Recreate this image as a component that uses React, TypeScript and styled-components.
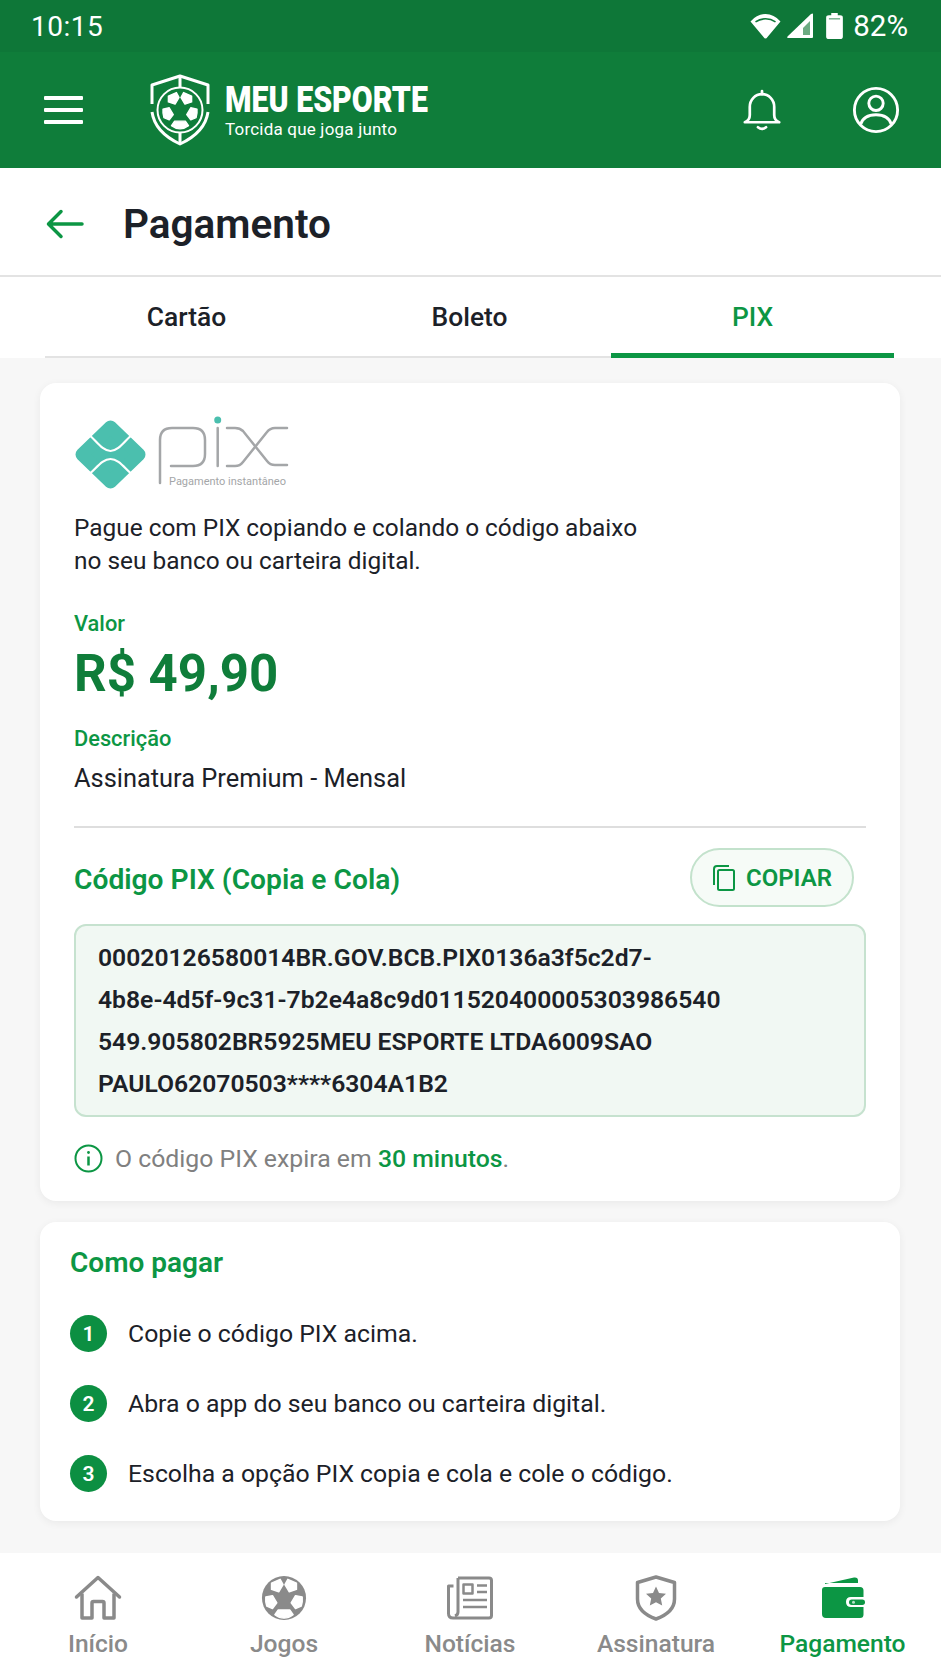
import { ReactNode } from "react";
import styled, { createGlobalStyle } from "styled-components";

const GlobalStyle = createGlobalStyle`
  html, body {
    margin: 0;
    padding: 0;
    background: #f7f7f7;
  }
  * {
    box-sizing: border-box;
  }
  body {
    font-family: Roboto, "Noto Sans", sans-serif;
    color: #1c2128;
  }
`;

function BallPanels({ fill, stroke }: { fill: string; stroke: string }) {
  return (
    <g fill={fill} stroke={stroke} strokeWidth="1.5" strokeLinejoin="round">
      <path d="M11 8.500L20 4.500l3 5.500-4.500 7.500L11 15z" />
      <path d="M37 8.500L28 4.500l-3 5.500 4.500 7.500L37 15z" />
      <path d="M5 23l7-1.500 4.500 7.500-4.500 6-6-2.500q-1.500-5-1-9.500z" />
      <path d="M43 23l-7-1.500-4.500 7.500 4.500 6 6-2.500q1.500-5 1-9.500z" />
      <path d="M18 36.500h12l3.500 5q-4.500 3.500-9.500 3.500t-9.500-3.500z" />
    </g>
  );
}

function SoccerBall({ size, color, panel }: { size: number; color: string; panel: string }) {
  return (
    <svg width={size} height={size} viewBox="0 0 48 48">
      <circle cx="24" cy="24" r="23" fill={color} />
      <BallPanels fill={panel} stroke={panel} />
    </svg>
  );
}

function BrandLogo() {
  return (
    <svg width="62" height="72" viewBox="0 0 62 72" fill="none">
      <path
        d="M3 30V11L31 2L59 11V30M59 38C57 52 46 63 31 70C16 63 5 52 3 38"
        stroke="#fff"
        strokeWidth="3"
        strokeLinejoin="round"
      />
      <path d="M31 2V13M31 59V70" stroke="#fff" strokeWidth="3" />
      <circle cx="31" cy="36" r="22.500" stroke="#fff" strokeWidth="2" />
      <svg x="9.500" y="14.500" width="43" height="43" viewBox="0 0 48 48">
        <BallPanels fill="#fff" stroke="#fff" />
      </svg>
    </svg>
  );
}

function PixLogo() {
  return (
    <svg width="224" height="76" viewBox="0 0 224 76" fill="none">
      <path d="M36.500 13L65 40.500 36.500 68 8 40.500z" fill="#4bbfae" stroke="#4bbfae" strokeWidth="13" strokeLinejoin="round" />
      <g stroke="#fff" strokeWidth="2.200">
        <path d="M13 19C22 26 28 37 36.500 37S51 26 60 19" />
        <path d="M13 62C22 55 28 45 36.500 45S51 55 60 62" />
      </g>
      <g stroke="#a4a6a8" strokeWidth="2.500" strokeLinecap="round">
        <path d="M86 69V26q0-12 12-12h21q12 0 12 12v14q0 12-12 12H97" />
        <path d="M143.700 14v38" />
        <path d="M153 14h8q5 0 8 3l24 30q3 4 8 4h12" />
        <path d="M153 52h8q5 0 8-4l24-30q3-4 8-4h12" />
      </g>
      <circle cx="143.700" cy="6" r="3.500" fill="#4bbfae" />
      <PixCaption x="95" y="71">Pagamento instantâneo</PixCaption>
    </svg>
  );
}

const PixCaption = styled.text`
  font-family: Roboto, sans-serif;
  font-size: 11px;
  fill: #a4a6a8;
`;

function NavHome() {
  return (
    <svg width="48" height="46" viewBox="0 0 48 46" fill="none" stroke="#8a8a8a" strokeWidth="3.500" strokeLinejoin="round">
      <path d="M2.500 22L24 2.500 45.500 22" strokeLinecap="round" />
      <path d="M8 18.500V43H18V28q0-1.500 1.500-1.500h9q1.500 0 1.500 1.500v15h10V18.500" />
    </svg>
  );
}

function NavNews() {
  return (
    <svg width="46" height="44" viewBox="0 0 46 44" fill="none" stroke="#8a8a8a" strokeWidth="3" strokeLinejoin="round">
      <path d="M11 2h31q2.500 0 2.500 2.500v35q0 2.500-2.500 2.500H6q-4.500 0-4.500-4.500V10h5" />
      <path d="M11 2v34q0 3-3 4" />
      <rect x="16.500" y="8.500" width="9" height="9" strokeWidth="2.500" />
      <path d="M30 9.500h10M30 16h10M16 24h24M16 31h24" strokeWidth="2.500" />
    </svg>
  );
}

function NavShield() {
  return (
    <svg width="42" height="46" viewBox="0 0 42 46" fill="none">
      <path d="M21 2L39.500 7.500V24C39.500 33 32 40 21 44C10 40 2.500 33 2.500 24V7.500Z" stroke="#8a8a8a" strokeWidth="3.500" strokeLinejoin="round" />
      <path d="M21 11.500l3 6.500 7 .800-5.200 4.800 1.400 7L21 27.200l-6.200 3.400 1.400-7L11 18.800l7-.800z" fill="#8a8a8a" />
    </svg>
  );
}

function NavWallet() {
  return (
    <svg width="46" height="44" viewBox="0 0 46 44" fill="none">
      <path d="M5 8L34 1.500q4-.5 4 3V7H5z" fill="#0c9644" />
      <path d="M5 11h35q3.500 0 3.500 3.500V21H31q-5 0-5 5t5 5h12.500v7.500q0 3.500-3.500 3.500H6q-4 0-4-4V14q0-3 3-3z" fill="#0c9644" />
      <rect x="29" y="23.500" width="16" height="5.500" rx="2.750" fill="#0c9644" />
      <circle cx="33.500" cy="26.200" r="1.500" fill="#fff" opacity="0.700" />
    </svg>
  );
}

type NavEntry = { label: string; icon: ReactNode; active?: boolean };

const navEntries: NavEntry[] = [
  { label: "Início", icon: <NavHome /> },
  { label: "Jogos", icon: <SoccerBall size={46} color="#8a8a8a" panel="#fff" /> },
  { label: "Notícias", icon: <NavNews /> },
  { label: "Assinatura", icon: <NavShield /> },
  { label: "Pagamento", icon: <NavWallet />, active: true },
];

const steps = [
  "Copie o código PIX acima.",
  "Abra o app do seu banco ou carteira digital.",
  "Escolha a opção PIX copia e cola e cole o código.",
];

export default function App() {
  return (
    <>
      <GlobalStyle />
      <Page>
        <Header>
          <StatusBar>
            <Clock>10:15</Clock>
            <StatusIcons>
              <svg width="31" height="26" viewBox="0 0 31 26" fill="#fff">
                <path d="M15.500 25.500q-1 0-2-1.500L.5 8.500Q7 1 15.500 1t15 7.500L17.500 24q-1 1.500-2 1.500z" />
                <path d="M5.500 8.800q4.500-3 10-3t10 3" stroke="#0e7738" strokeWidth="1.600" fill="none" />
              </svg>
              <svg width="35" height="26" viewBox="0 0 35 26">
                <path d="M27 1v23q0 1-1 1H2q-1.500 0-.5-1.500L25 1q2-1 2 0z" fill="#fff" />
                <path d="M24 8v14h-7v-7z" fill="#6cab82" />
              </svg>
              <svg width="17" height="26" viewBox="0 0 18 28" fill="#fff">
                <path d="M5.500 0h7v2.500H15q3 0 3 2.500v20.500q0 2.500-3 2.500H3q-3 0-3-2.500V5q0-2.500 3-2.500h2.500z" />
                <path d="M3 5.500h12v1.500H3z" fill="#0e7738" opacity="0.600" />
              </svg>
              <Percent>82%</Percent>
            </StatusIcons>
          </StatusBar>
          <TopBar>
            <Burger aria-label="Menu">
              <span />
              <span />
              <span />
            </Burger>
            <Brand>
              <BrandLogo />
              <BrandText>
                <BrandName>MEU ESPORTE</BrandName>
                <BrandTagline>Torcida que joga junto</BrandTagline>
              </BrandText>
            </Brand>
            <TopActions>
              <svg width="38" height="43" viewBox="0 0 42 46" fill="none" stroke="#fff" strokeWidth="3" strokeLinejoin="round" strokeLinecap="round">
                <path d="M21 1.500v3.500" />
                <path d="M2 36q5.500-2 5.500-8v-9C7.500 11 13.500 5 21 5s13.500 6 13.500 14v9q0 6 5.500 8z" />
                <path d="M16.500 41.500q4.500 3.500 9 0" />
              </svg>
              <svg width="48" height="48" viewBox="0 0 50 50" fill="none" stroke="#fff" strokeWidth="3">
                <circle cx="25" cy="25" r="22.500" />
                <circle cx="25" cy="18" r="7.500" />
                <path d="M9 40q3-10 16-10t16 10" />
              </svg>
            </TopActions>
          </TopBar>
        </Header>

        <TitleBar>
          <BackButton aria-label="Voltar">
            <svg width="38" height="30" viewBox="0 0 38 30" fill="none" stroke="#0c9644" strokeWidth="3.500" strokeLinecap="round" strokeLinejoin="round">
              <path d="M36 15H3M15 2.500L2.500 15 15 27.500" />
            </svg>
          </BackButton>
          <Title>Pagamento</Title>
        </TitleBar>

        <Tabs>
          <Tab>Cartão</Tab>
          <Tab>Boleto</Tab>
          <Tab $active>PIX</Tab>
        </Tabs>

        <Content>
          <PixCard>
            <PixLogo />
            <Intro>
              Pague com PIX copiando e colando o código abaixo
              <br />
              no seu banco ou carteira digital.
            </Intro>
            <SmallLabel $top={34}>Valor</SmallLabel>
            <Amount>R$ 49,90</Amount>
            <SmallLabel $top={22}>Descrição</SmallLabel>
            <Description>Assinatura Premium - Mensal</Description>
            <Divider />
            <CodeHeader>
              <CodeTitle>Código PIX (Copia e Cola)</CodeTitle>
              <CopyButton>
                <svg width="24" height="26" viewBox="0 0 24 26" fill="none" stroke="#0c9644" strokeWidth="2" strokeLinejoin="round">
                  <path d="M2 20V4q0-3 3-3h12" />
                  <rect x="6" y="5" width="16" height="20" rx="1.500" />
                </svg>
                COPIAR
              </CopyButton>
            </CodeHeader>
            <CodeBox>
              00020126580014BR.GOV.BCB.PIX0136a3f5c2d7-
              <br />
              4b8e-4d5f-9c31-7b2e4a8c9d011520400005303986540
              <br />
              549.905802BR5925MEU ESPORTE LTDA6009SAO
              <br />
              PAULO62070503****6304A1B2
            </CodeBox>
            <Expiry>
              <svg width="29" height="29" viewBox="0 0 29 29" fill="none" stroke="#0c9644" strokeWidth="2">
                <circle cx="14.500" cy="14.500" r="13" />
                <path d="M14.500 12.500v9" strokeWidth="2.500" />
                <circle cx="14.500" cy="8.500" r="1.400" fill="#0c9644" stroke="none" />
              </svg>
              <span>
                O código PIX expira em <strong>30 minutos</strong>.
              </span>
            </Expiry>
          </PixCard>

          <HowToCard>
            <HowToTitle>Como pagar</HowToTitle>
            <StepList>
              {steps.map((step, i) => (
                <Step key={step}>
                  <StepNumber>{i + 1}</StepNumber>
                  {step}
                </Step>
              ))}
            </StepList>
          </HowToCard>
        </Content>

        <BottomNav>
          {navEntries.map((entry) => (
            <NavItem key={entry.label} $active={entry.active}>
              <NavIcon>{entry.icon}</NavIcon>
              {entry.label}
            </NavItem>
          ))}
        </BottomNav>
      </Page>
    </>
  );
}

const Page = styled.div`
  width: 941px;
  height: 1672px;
  display: flex;
  flex-direction: column;
  overflow: hidden;
  background: #f7f7f7;
`;

const Header = styled.header`
  height: 168px;
  flex-shrink: 0;
  background: #0f7d3a;
`;

const StatusBar = styled.div`
  height: 52px;
  padding: 0 33px 0 31px;
  display: flex;
  align-items: center;
  justify-content: space-between;
  background: #0e7738;
  color: #fff;
`;

const Clock = styled.span`
  font-size: 28px;
  letter-spacing: 0.5px;
`;

const StatusIcons = styled.div`
  display: flex;
  align-items: center;
  gap: 5px;
`;

const Percent = styled.span`
  font-size: 29.500px;
  margin-left: 5px;
`;

const TopBar = styled.div`
  height: 116px;
  padding: 0 41px 0 44px;
  display: flex;
  align-items: center;
`;

const Burger = styled.div`
  width: 39px;
  display: flex;
  flex-direction: column;
  gap: 8px;

  span {
    height: 4px;
    background: #fff;
    border-radius: 1px;
  }
`;

const Brand = styled.div`
  margin-left: 66px;
  display: flex;
  align-items: center;
  gap: 14px;
`;

const BrandText = styled.div`
  display: flex;
  flex-direction: column;
  color: #fff;
`;

const BrandName = styled.div`
  width: 203px;
  font-size: 36.500px;
  font-weight: 900;
  line-height: 36px;
  white-space: nowrap;
  transform: scaleX(0.83);
  transform-origin: left center;
`;

const BrandTagline = styled.div`
  margin-top: 2px;
  font-size: 17px;
  line-height: 18px;
  letter-spacing: 0.2px;
`;

const TopActions = styled.div`
  margin-left: auto;
  display: flex;
  align-items: center;
  gap: 71px;
`;

const TitleBar = styled.div`
  height: 109px;
  flex-shrink: 0;
  padding: 5px 0 0 46px;
  display: flex;
  align-items: center;
  background: #fff;
  border-bottom: 2px solid #e3e3e3;
`;

const BackButton = styled.div`
  width: 77px;
  display: flex;
  align-items: center;
`;

const Title = styled.h1`
  margin: 0;
  font-size: 40.500px;
  font-weight: 600;
  color: #1c2128;
`;

const Tabs = styled.nav`
  height: 81px;
  flex-shrink: 0;
  padding: 0 47px 0 45px;
  display: grid;
  grid-template-columns: 1fr 1fr 1fr;
  background: #fff;
`;

const Tab = styled.div<{ $active?: boolean }>`
  padding-bottom: 2px;
  display: flex;
  align-items: center;
  justify-content: center;
  font-size: 26.400px;
  font-weight: 500;
  color: ${(p) => (p.$active ? "#0c9644" : "#1c2128")};
  box-shadow: ${(p) => (p.$active ? "inset 0 -5px 0 #0c9644" : "inset 0 -2px 0 #e3e3e3")};
`;

const Content = styled.main`
  flex: 1;
  padding: 25px 41px 0 40px;
  display: flex;
  flex-direction: column;
  gap: 21px;
`;

const Card = styled.section`
  background: #fff;
  border-radius: 16px;
  box-shadow: 0 2px 8px rgba(0, 0, 0, 0.06);
`;

const PixCard = styled(Card)`
  height: 818px;
  padding: 31px 34px 0;
`;

const Intro = styled.p`
  margin: 17px 0 0;
  font-size: 24.400px;
  line-height: 33px;
  color: #1c2128;
`;

const SmallLabel = styled.div<{ $top: number }>`
  margin-top: ${(p) => p.$top}px;
  font-size: 21.800px;
  line-height: 26px;
  font-weight: 500;
  color: #0c9644;
`;

const Amount = styled.div`
  margin-top: 7px;
  font-size: 51px;
  line-height: 60px;
  font-weight: 700;
  color: #0f7d3a;
`;

const Description = styled.div`
  margin-top: 9px;
  font-size: 25.400px;
  line-height: 34px;
`;

const Divider = styled.hr`
  margin: 31px 0 0;
  border: 0;
  border-top: 2px solid #dedede;
`;

const CodeHeader = styled.div`
  height: 59px;
  margin-top: 20px;
  padding-right: 12px;
  display: flex;
  align-items: center;
  justify-content: space-between;
`;

const CodeTitle = styled.h2`
  margin: 3px 0 0;
  font-size: 28.200px;
  font-weight: 600;
  color: #0c9644;
`;

const CopyButton = styled.div`
  width: 164px;
  height: 59px;
  display: flex;
  align-items: center;
  justify-content: center;
  gap: 10px;
  font-size: 24px;
  font-weight: 600;
  color: #0c9644;
  background: #f6fbf7;
  border: 2px solid #c3e2cc;
  border-radius: 30px;
`;

const CodeBox = styled.div`
  height: 193px;
  margin-top: 17px;
  padding: 11px 22px;
  font-size: 24.700px;
  line-height: 42px;
  font-weight: 600;
  color: #1c2128;
  background: #f1f8f3;
  border: 2px solid #c6e2cf;
  border-radius: 12px;
`;

const Expiry = styled.div`
  margin-top: 27px;
  display: flex;
  align-items: center;
  gap: 12px;
  font-size: 24.800px;
  color: #808080;

  strong {
    font-weight: 500;
    color: #0c9644;
  }
`;

const HowToCard = styled(Card)`
  height: 299px;
  padding: 24px 30px 0;
`;

const HowToTitle = styled.h2`
  margin: 0;
  font-size: 28px;
  line-height: 34px;
  font-weight: 600;
  color: #0c9644;
`;

const StepList = styled.ol`
  margin: 35px 0 0;
  padding: 0;
  list-style: none;
  display: flex;
  flex-direction: column;
  gap: 33px;
`;

const Step = styled.li`
  display: flex;
  align-items: center;
  gap: 21px;
  height: 37px;
  font-size: 24.800px;
`;

const StepNumber = styled.span`
  width: 37px;
  height: 37px;
  flex-shrink: 0;
  display: flex;
  align-items: center;
  justify-content: center;
  border-radius: 50%;
  background: #0c8f42;
  color: #fff;
  font-size: 21px;
  font-weight: 600;
`;

const BottomNav = styled.nav`
  height: 119px;
  flex-shrink: 0;
  padding: 22px 5px 0;
  display: grid;
  grid-template-columns: 186px 186px 186px 186px 187px;
  background: #fff;
`;

const NavItem = styled.div<{ $active?: boolean }>`
  display: flex;
  flex-direction: column;
  align-items: center;
  gap: 8px;
  font-size: 24.600px;
  font-weight: 500;
  color: ${(p) => (p.$active ? "#0c9644" : "#8a8a8a")};
`;

const NavIcon = styled.div`
  height: 46px;
  display: flex;
  align-items: center;
  justify-content: center;
`;
